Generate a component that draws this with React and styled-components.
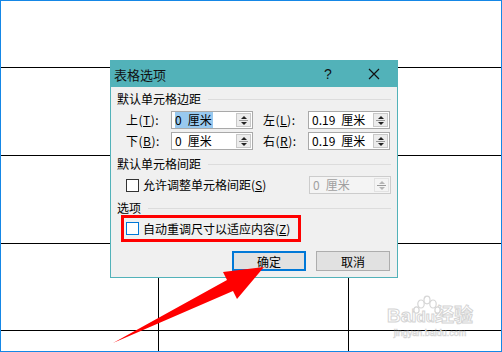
import React from 'react';
import styled, { createGlobalStyle } from 'styled-components';

const GlobalStyle = createGlobalStyle`
  html, body {
    margin: 0;
    padding: 0;
    background: #ffffff;
  }
  body {
    font-family: "Noto Sans CJK SC", "Liberation Sans", sans-serif;
    color: #000;
  }
  * {
    box-sizing: border-box;
  }
`;

export default function App() {
  return (
    <Page>
      <GlobalStyle />
      <TopGap />
      {[88, 88, 87, 0].map((h, i) => (
        <TableRow key={i} $height={h}>
          <Cell />
          <Cell />
          <Cell />
        </TableRow>
      ))}

      <Dialog>
        <TitleBar>
          <Title>表格选项</Title>
          <TitleButton $width={46}>?</TitleButton>
          <TitleButton $width={46}>
            <svg width="12" height="12" viewBox="0 0 12 12">
              <path d="M1 1 L11 11 M11 1 L1 11" stroke="#111" strokeWidth="1.2" />
            </svg>
          </TitleButton>
        </TitleBar>

        <Body>
          <GroupHeader>
            <span>默认单元格边距</span>
            <Rule />
          </GroupHeader>
          <FieldGrid>
            <Label>上(<u>T</u>):</Label>
            <Spin value={'0\u2002厘米'} selected />
            <Label $second>左(<u>L</u>):</Label>
            <Spin value={'0.19\u2002厘米'} />
            <Label>下(<u>B</u>):</Label>
            <Spin value={'0\u2002厘米'} />
            <Label $second>右(<u>R</u>):</Label>
            <Spin value={'0.19\u2002厘米'} />
          </FieldGrid>

          <GroupHeader $top={6}>
            <span>默认单元格间距</span>
            <Rule />
          </GroupHeader>
          <CheckRow>
            <CheckLabel>
              <Box />
              <span>允许调整单元格间距(<u>S</u>)</span>
            </CheckLabel>
            <Spin value={'0\u2002厘米'} disabled />
          </CheckRow>

          <GroupHeader $top={6}>
            <span>选项</span>
            <Rule />
          </GroupHeader>
          <Highlight>
            <CheckLabel>
              <Box $focus />
              <span>自动重调尺寸以适应内容(<u>Z</u>)</span>
            </CheckLabel>
          </Highlight>

          <Buttons>
            <Button $default>确定</Button>
            <Button>取消</Button>
          </Buttons>
        </Body>
      </Dialog>

      <Arrow viewBox="0 0 500 350" width="500" height="350">
        <polygon
          points="112,342 226,279 222,271 263,266 236,298 232,290"
          fill="#ff0000"
        />
      </Arrow>

      <Watermark>
        <Paw viewBox="0 0 30 24" width="30" height="24">
          <g fill="#fff" stroke="#d6d6d6" strokeWidth="1.2">
            <ellipse cx="9" cy="9" rx="3.2" ry="4" />
            <ellipse cx="15" cy="5" rx="3" ry="3.8" />
            <ellipse cx="21" cy="9" rx="3.2" ry="4" />
            <ellipse cx="4.5" cy="15" rx="2.6" ry="3.2" />
            <ellipse cx="25.5" cy="15" rx="2.6" ry="3.2" />
          </g>
        </Paw>
        <Brand>Bai<span>du</span>经验</Brand>
        <Url>jingyan.baidu.com</Url>
      </Watermark>
    </Page>
  );
}

function Spin({ value, selected, disabled }) {
  return (
    <SpinBox $disabled={disabled}>
      <SpinText $disabled={disabled}>
        {selected ? <Selected>{value}</Selected> : value}
      </SpinText>
      <SpinButtons $disabled={disabled}>
        <Tri $up $disabled={disabled} />
        <SpinDivider />
        <Tri $disabled={disabled} />
      </SpinButtons>
    </SpinBox>
  );
}

const Page = styled.div`
  position: relative;
  width: 502px;
  height: 352px;
  border: 1px solid #1587e6;
  background: #ffffff;
  overflow: hidden;
  display: flex;
  flex-direction: column;
`;

const TopGap = styled.div`
  height: 66px;
  flex-shrink: 0;
`;

const TableRow = styled.div`
  display: grid;
  grid-template-columns: 157px 190px 1fr;
  border-top: 1px solid #000;
  flex-shrink: 0;
  height: ${(p) => (p.$height ? `${p.$height}px` : 'auto')};
  flex-grow: ${(p) => (p.$height ? 0 : 1)};
`;

const Cell = styled.div`
  & + & {
    border-left: 1px solid #000;
  }
`;

const Dialog = styled.div`
  position: absolute;
  left: 109px;
  top: 59px;
  width: 288px;
  height: 218px;
  border: 1px solid #52b2b9;
  background: #f0f0f0;
  display: flex;
  flex-direction: column;
  z-index: 2;
`;

const TitleBar = styled.div`
  height: 26px;
  background: #52b2b9;
  display: flex;
  align-items: center;
  padding-left: 3px;
  flex-shrink: 0;
`;

const Title = styled.div`
  flex: 1;
  font-size: 13px;
  color: #111;
`;

const TitleButton = styled.div`
  width: ${(p) => p.$width}px;
  height: 26px;
  display: flex;
  align-items: center;
  justify-content: center;
  font-size: 14px;
  font-family: "Liberation Sans", sans-serif;
  color: #111;
`;

const Body = styled.div`
  flex: 1;
  display: flex;
  flex-direction: column;
  padding: 4px 6px 0 6px;
`;

const GroupHeader = styled.div`
  display: flex;
  align-items: center;
  gap: 7px;
  height: 16px;
  margin-top: ${(p) => p.$top || 0}px;
  font-size: 12px;
  line-height: 16px;
`;

const Rule = styled.div`
  flex: 1;
  height: 1px;
  background: #dcdcdc;
`;

const FieldGrid = styled.div`
  display: grid;
  grid-template-columns: 45px 82px 55px 82px;
  row-gap: 3px;
  margin-top: 4px;
  padding-left: 9px;
  align-items: center;
`;

const Label = styled.div`
  font-size: 12px;
  line-height: 18px;
  white-space: nowrap;
  padding-left: ${(p) => (p.$second ? 10 : 0)}px;
  letter-spacing: 0.5px;
`;

const SpinBox = styled.div`
  height: 18px;
  border: 1px solid ${(p) => (p.$disabled ? '#cccccc' : '#a9a9a9')};
  background: ${(p) => (p.$disabled ? '#f4f4f4' : '#ffffff')};
  display: flex;
  align-items: stretch;
`;

const SpinText = styled.div`
  flex: 1;
  font-size: 12px;
  line-height: 16px;
  padding-left: 3px;
  color: ${(p) => (p.$disabled ? '#a0a0a0' : '#000')};
  white-space: nowrap;
  overflow: hidden;
`;

const Selected = styled.span`
  background: #99c9ef;
  display: inline-block;
  line-height: 16px;
  padding-right: 1px;
`;

const SpinButtons = styled.div`
  width: 15px;
  margin: 1px 1px 1px 0;
  border: 1px solid ${(p) => (p.$disabled ? '#e2e2e2' : '#c8c8c8')};
  background: ${(p) => (p.$disabled ? '#f4f4f4' : '#ececec')};
  display: flex;
  flex-direction: column;
  align-items: center;
  justify-content: center;
  gap: 1px;
`;

const SpinDivider = styled.div`
  width: 9px;
  height: 1px;
  background: #9a9a9a;
`;

const Tri = styled.div`
  width: 0;
  height: 0;
  border-left: 3px solid transparent;
  border-right: 3px solid transparent;
  ${(p) => (p.$up ? 'border-bottom' : 'border-top')}: 3px solid ${(p) => (p.$disabled ? '#b5b5b5' : '#222')};
`;

const CheckRow = styled.div`
  display: grid;
  grid-template-columns: 1fr 82px;
  align-items: center;
  margin-top: 4px;
  padding-left: 9px;
  padding-right: 0;
`;

const CheckLabel = styled.label`
  display: flex;
  align-items: center;
  gap: 4px;
  font-size: 12px;
  line-height: 16px;
  white-space: nowrap;
`;

const Box = styled.span`
  width: 13px;
  height: 13px;
  border: 1px solid ${(p) => (p.$focus ? '#0078d7' : '#333')};
  background: #fff;
  flex-shrink: 0;
`;

const Highlight = styled.div`
  width: 180px;
  height: 27px;
  margin-left: 4px;
  margin-top: -1px;
  border: 3px solid #ff0000;
  display: flex;
  align-items: center;
  padding-left: 2px;
`;

const Buttons = styled.div`
  display: flex;
  justify-content: flex-end;
  gap: 10px;
  margin-top: 9px;
  padding-right: 1px;
`;

const Button = styled.div`
  width: 74px;
  height: 20px;
  background: #e1e1e1;
  border: ${(p) => (p.$default ? '2px solid #0078d7' : '1px solid #adadad')};
  display: flex;
  align-items: center;
  justify-content: center;
  font-size: 12px;
  color: #000;
`;

const Arrow = styled.svg`
  position: absolute;
  left: 0;
  top: 0;
  z-index: 3;
  pointer-events: none;
`;

const Watermark = styled.div`
  position: absolute;
  left: 383px;
  top: 294px;
  width: 92px;
  display: flex;
  flex-direction: column;
  align-items: center;
  z-index: 1;
`;

const Paw = styled.svg`
  position: absolute;
  left: 28px;
  top: 0;
`;

const Brand = styled.div`
  margin-top: 10px;
  font-family: "Liberation Sans", "Noto Sans CJK SC", sans-serif;
  font-weight: bold;
  font-size: 19px;
  line-height: 22px;
  color: #fff;
  -webkit-text-stroke: 1px #d4d4d4;
  letter-spacing: 0px;
  white-space: nowrap;

  span {
    font-size: 15px;
  }
`;

const Url = styled.div`
  font-family: "Liberation Sans", sans-serif;
  font-size: 9px;
  line-height: 11px;
  color: #fff;
  -webkit-text-stroke: 0.6px #d4d4d4;
  white-space: nowrap;
`;
